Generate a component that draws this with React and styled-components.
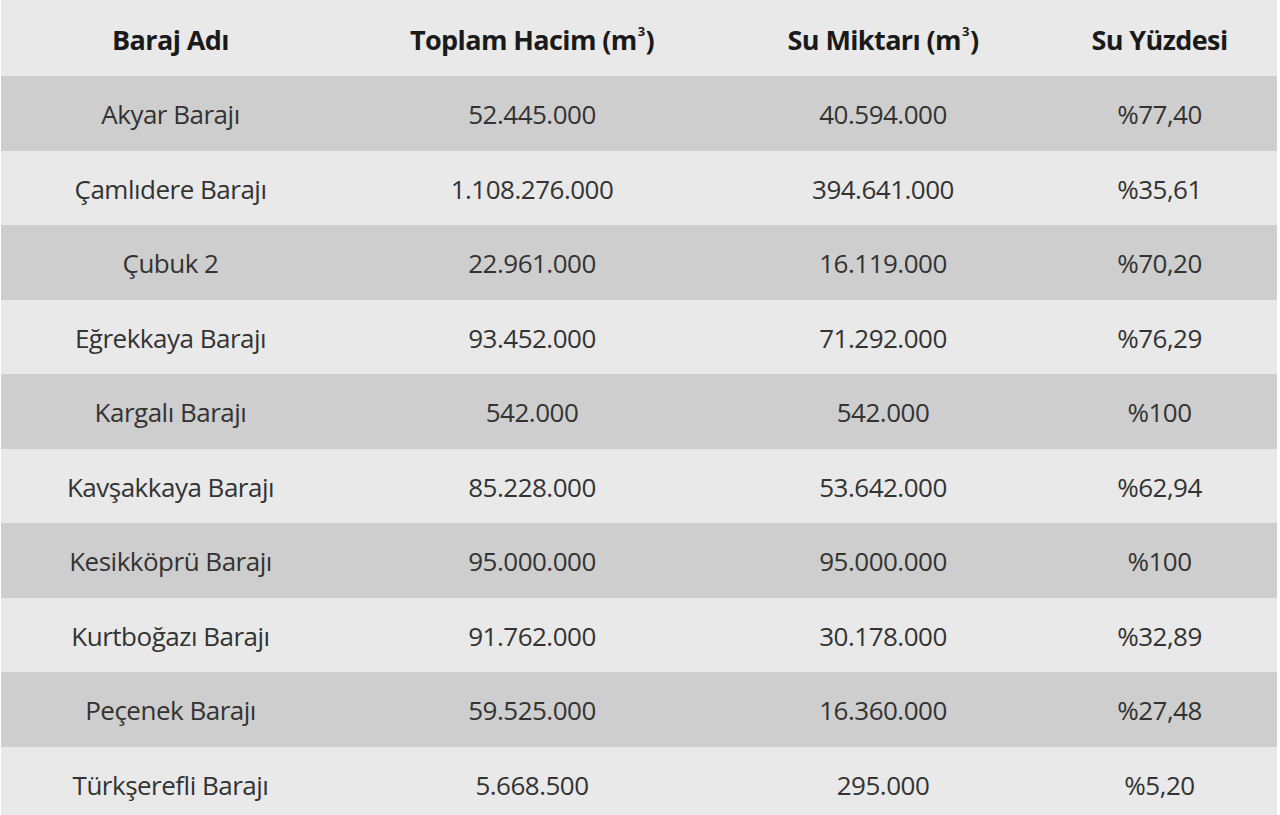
import React from "react";
import styled, { createGlobalStyle } from "styled-components";

const Global = createGlobalStyle`
  html, body { margin: 0; padding: 0; background: #ffffff; }
  body { font-family: "Open Sans", "Noto Sans", sans-serif; }
`;

const Wrap = styled.div`
  width: 1280px;
  height: 815px;
  overflow: hidden;
  padding: 0 3px 0 1px;
  box-sizing: border-box;
  background: #ffffff;
`;

const Table = styled.table`
  width: 100%;
  border-collapse: collapse;
  table-layout: fixed;
`;

const HeadCell = styled.th`
  height: 76px;
  padding: 2px 0 0;
  background: #e9e9e9;
  color: #1a1a1a;
  font-size: 27px;
  font-weight: 700;
  letter-spacing: -0.6px;
  text-align: center;
  vertical-align: middle;
  box-sizing: border-box;
`;

const Row = styled.tr`
  background: ${(p) => (p.$dark ? "#cecece" : "#e9e9e9")};
`;

const Cell = styled.td`
  height: 74.5px;
  padding: 2px 0 0;
  color: #333333;
  font-size: 26px;
  font-weight: 400;
  letter-spacing: -0.5px;
  text-align: center;
  vertical-align: middle;
  box-sizing: border-box;
`;

const Sup = styled.sup`
  font-size: 13px;
  vertical-align: 0;
  position: relative;
  top: -14px;
  margin: 0 1px;
`;

const rows = [
  ["Akyar Barajı", "52.445.000", "40.594.000", "%77,40"],
  ["Çamlıdere Barajı", "1.108.276.000", "394.641.000", "%35,61"],
  ["Çubuk 2", "22.961.000", "16.119.000", "%70,20"],
  ["Eğrekkaya Barajı", "93.452.000", "71.292.000", "%76,29"],
  ["Kargalı Barajı", "542.000", "542.000", "%100"],
  ["Kavşakkaya Barajı", "85.228.000", "53.642.000", "%62,94"],
  ["Kesikköprü Barajı", "95.000.000", "95.000.000", "%100"],
  ["Kurtboğazı Barajı", "91.762.000", "30.178.000", "%32,89"],
  ["Peçenek Barajı", "59.525.000", "16.360.000", "%27,48"],
  ["Türkşerefli Barajı", "5.668.500", "295.000", "%5,20"],
];

export default function App() {
  return (
    <Wrap>
      <Global />
      <Table>
        <colgroup>
          <col style={{ width: 339 }} />
          <col style={{ width: 384 }} />
          <col style={{ width: 318 }} />
          <col style={{ width: 235 }} />
        </colgroup>
        <thead>
          <tr>
            <HeadCell>Baraj Adı</HeadCell>
            <HeadCell>
              Toplam Hacim (m<Sup>3</Sup>)
            </HeadCell>
            <HeadCell>
              Su Miktarı (m<Sup>3</Sup>)
            </HeadCell>
            <HeadCell>Su Yüzdesi</HeadCell>
          </tr>
        </thead>
        <tbody>
          {rows.map((r, i) => (
            <Row key={r[0]} $dark={i % 2 === 0}>
              {r.map((c, j) => (
                <Cell key={j}>{c}</Cell>
              ))}
            </Row>
          ))}
        </tbody>
      </Table>
    </Wrap>
  );
}
